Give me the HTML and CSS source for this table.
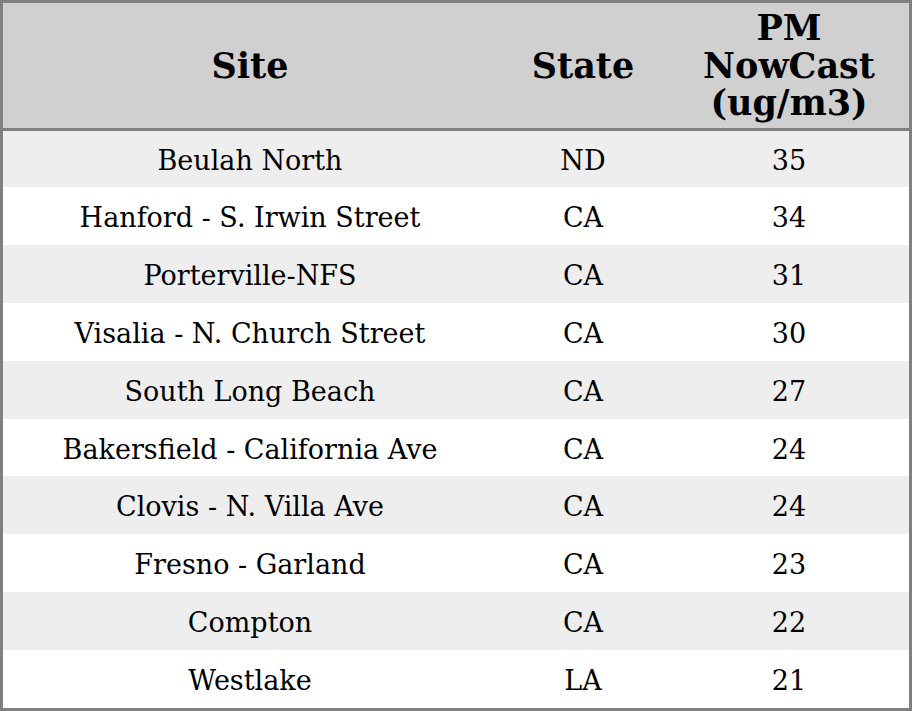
FILE: index.html
```html
<!DOCTYPE html>
<html>
<head>
<meta charset="utf-8">
<link rel="stylesheet" href="styles.css">
</head>
<body>
<table class="aq-table">
  <colgroup>
    <col class="col-site">
    <col class="col-state">
    <col class="col-pm">
  </colgroup>
  <thead>
    <tr class="head-row">
      <th>Site</th>
      <th>State</th>
      <th>PM NowCast (ug/m3)</th>
    </tr>
  </thead>
  <tbody>
    <tr class="first-row"><td>Beulah North</td><td>ND</td><td>35</td></tr>
    <tr><td>Hanford - S. Irwin Street</td><td>CA</td><td>34</td></tr>
    <tr><td>Porterville-NFS</td><td>CA</td><td>31</td></tr>
    <tr><td>Visalia - N. Church Street</td><td>CA</td><td>30</td></tr>
    <tr><td>South Long Beach</td><td>CA</td><td>27</td></tr>
    <tr><td>Bakersfield - California Ave</td><td>CA</td><td>24</td></tr>
    <tr><td>Clovis - N. Villa Ave</td><td>CA</td><td>24</td></tr>
    <tr><td>Fresno - Garland</td><td>CA</td><td>23</td></tr>
    <tr><td>Compton</td><td>CA</td><td>22</td></tr>
    <tr><td>Westlake</td><td>LA</td><td>21</td></tr>
  </tbody>
</table>
</body>
</html>
```

FILE: styles.css
```css
html, body {
  margin: 0;
  padding: 0;
  background: #ffffff;
}

.aq-table {
  width: 912px;
  height: 711px;
  table-layout: fixed;
  border-collapse: separate;
  border-spacing: 0;
  border: 3px solid #808080;
  box-sizing: border-box;
  font-family: "DejaVu Serif", serif;
  color: #000;
}

.col-site { width: 494px; }
.col-state { width: 172px; }
.col-pm { width: 240px; }

.aq-table th {
  background: #d0d0d0;
  font-size: 35px;
  font-weight: bold;
  line-height: 37.5px;
  text-align: center;
  vertical-align: middle;
  padding: 0 8px;
  height: 125px;
  box-sizing: content-box;
  border-bottom: 3px solid #808080;
}

.aq-table td {
  font-size: 27px;
  text-align: center;
  vertical-align: middle;
  padding: 3px 8px 0;
  height: 57.9px;
  box-sizing: border-box;
}

.aq-table tbody tr.first-row td {
  height: 56px;
  padding-top: 2px;
}

.aq-table tbody tr:nth-child(odd) {
  background: #eeeeee;
}

.aq-table tbody tr:nth-child(even) {
  background: #ffffff;
}
```
